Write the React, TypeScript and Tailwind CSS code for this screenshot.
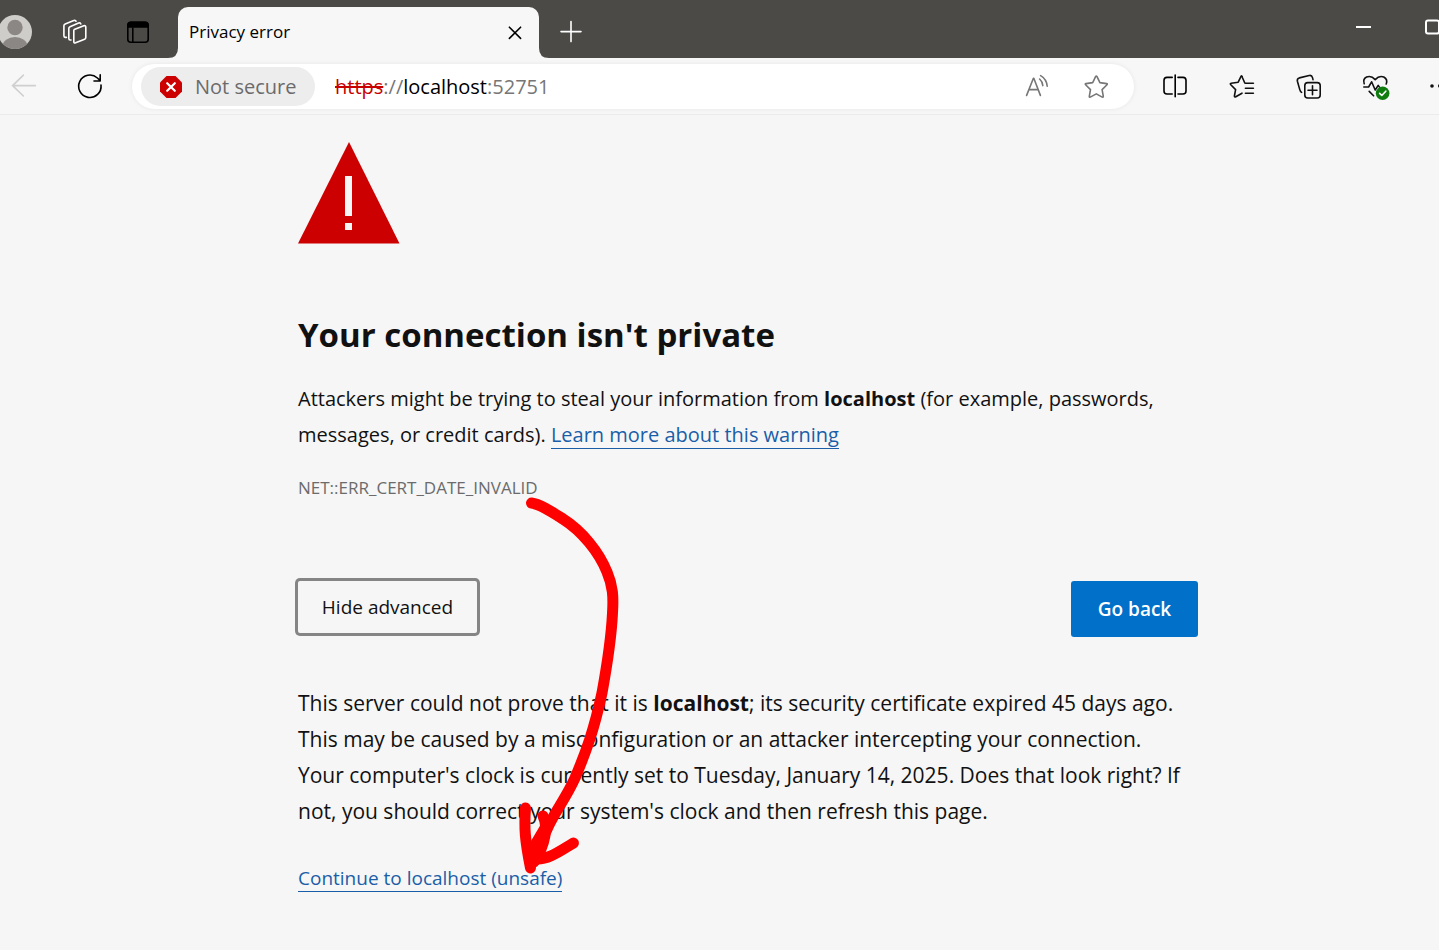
import React from "react";

type IconProps = { className?: string; children: React.ReactNode };

function Icon({ className = "", children }: IconProps) {
  return (
    <svg
      viewBox="0 0 28 28"
      className={`size-7 shrink-0 ${className}`}
      fill="none"
      stroke="currentColor"
      strokeWidth="1.6"
      strokeLinecap="round"
      strokeLinejoin="round"
      aria-hidden="true"
    >
      {children}
    </svg>
  );
}

function TitleBar() {
  return (
    <header className="flex h-[58px] items-end overflow-hidden bg-[#4b4a47] text-white">
      <div className="flex h-[51px] w-[168px] shrink-0 items-center pb-[2px]">
        <button type="button" aria-label="Profile" className="-ml-[2px]">
          <svg viewBox="0 0 34 34" className="size-[34px]" aria-hidden="true">
            <defs>
              <clipPath id="avatar">
                <circle cx="17" cy="17" r="17" />
              </clipPath>
            </defs>
            <g clipPath="url(#avatar)">
              <rect width="34" height="34" fill="#cfcdca" />
              <circle cx="17" cy="12.5" r="7.7" fill="#8b8784" />
              <ellipse cx="17" cy="31" rx="12.5" ry="9" fill="#8b8784" />
            </g>
          </svg>
        </button>
        <button type="button" aria-label="Workspaces" className="ml-[29px]">
          <Icon>
            <path d="M13.2 11.6 22.8 7.8Q24.8 7.2 24.8 9.2V19.2Q24.8 20.6 23.6 21.2L14.6 24.8Q12.8 25.4 12.8 23.6V12.8Q12.8 11.9 13.2 11.6Z" />
            <path d="M10 22H9.2Q7.8 22 7.8 20.4V10.6Q7.8 9.2 9 8.7L17.6 5Q19.6 4.4 19.8 6" />
            <path d="M5.4 19.4H4.2Q2.9 19.2 2.9 17.8V7.8Q2.9 6.6 4.2 6L12.8 2.6Q14.6 2 15 3.2" />
          </Icon>
        </button>
        <button type="button" aria-label="Tab actions menu" className="ml-[35px] text-black">
          <Icon>
            <rect x="3.8" y="4.2" width="20.4" height="20" rx="3" />
            <path d="M4 9V6.5Q4.5 4.2 7 4.2H21Q23.5 4.2 24 6.5V9Z" fill="currentColor" />
            <path d="M8.8 10V24" />
          </Icon>
        </button>
      </div>
      <svg viewBox="0 0 10 10" className="size-[10px] shrink-0" aria-hidden="true">
        <path d="M10 0V10H0Q10 10 10 0Z" fill="#f7f7f7" />
      </svg>
      <div className="flex h-[51px] w-[361px] shrink-0 items-center justify-between rounded-t-[10px] bg-[#f7f7f7] pb-[2px] pl-[11px] pr-[10px] text-black">
        <span className="text-[17px] leading-6">Privacy error</span>
        <button type="button" aria-label="Close tab">
          <Icon>
            <path d="M8.4 9.2 19.6 20.4M19.6 9.2 8.4 20.4" />
          </Icon>
        </button>
      </div>
      <svg viewBox="0 0 10 10" className="size-[10px] shrink-0" aria-hidden="true">
        <path d="M0 0V10H10Q0 10 0 0Z" fill="#f7f7f7" />
      </svg>
      <div className="flex h-[51px] flex-1 items-center pb-[2px] pl-[8px]">
        <button type="button" aria-label="New tab">
          <Icon>
            <path d="M14 3.6V23.6M4 13.6H24" />
          </Icon>
        </button>
      </div>
      <div className="-mr-[9px] flex h-[58px] items-center gap-[40px] pb-[4px]">
        <button type="button" aria-label="Minimize">
          <Icon>
            <path d="M4 14H19" strokeWidth="2" strokeLinecap="butt" />
          </Icon>
        </button>
        <button type="button" aria-label="Maximize">
          <Icon>
            <rect x="6" y="7.5" width="13" height="13" rx="2" strokeWidth="2" />
          </Icon>
        </button>
      </div>
    </header>
  );
}

function AddressBar() {
  return (
    <div className="ml-[28px] flex h-[45px] flex-1 items-center rounded-full bg-white pl-[9px] pr-[24px] shadow-[0_0_5px_rgba(0,0,0,0.07)]">
      <button
        type="button"
        className="flex h-[39px] w-[174px] shrink-0 items-center gap-[12px] rounded-full bg-[#ededed] pl-[18px] text-[20px] leading-7 text-[#6b6b6b]"
      >
        <svg viewBox="0 0 24 24" className="size-6 shrink-0" aria-hidden="true">
          <path d="M7.5 1H16.5L23 7.5V16.5L16.5 23H7.5L1 16.5V7.5Z" fill="#cc0000" />
          <path d="M8.2 8.2 15.8 15.8M15.8 8.2 8.2 15.8" stroke="#fff" strokeWidth="2.2" strokeLinecap="round" />
        </svg>
        <span className="whitespace-nowrap">Not secure</span>
      </button>
      <div
        role="textbox"
        aria-label="Address and search bar"
        tabIndex={0}
        className="ml-[20px] flex-1 whitespace-nowrap text-[20px] leading-7 text-[#767676]"
      >
        <span className="text-[#c80000] line-through">https</span>://<span className="text-black">localhost</span>:52751
      </div>
      <button type="button" aria-label="Read aloud" className="text-[#767676]">
        <Icon>
          <path d="M3.6 22.4 10.4 5.2H10.8L17.4 22.4M6 16.600H15" />
          <path d="M16.6 6Q19.4 8.400 19.8 12.600M17.6 2.600Q23.6 6 24.2 13.200" />
        </Icon>
      </button>
      <button type="button" aria-label="Add to favorites" className="ml-[31px] text-[#767676]">
        <Icon>
          <path d="M14.9 3.4 17.9 9.6 24.6 10.6Q25.8 10.9 25 11.8L20.1 16.6 21.3 23.3Q21.3 24.5 20.2 24.1L14.3 20.9 8.3 24.1Q7.2 24.5 7.3 23.3L8.5 16.6 3.6 11.8Q2.8 10.9 4 10.6L10.7 9.6 13.7 3.4Q14.3 2.5 14.9 3.4Z" />
        </Icon>
      </button>
    </div>
  );
}

function Toolbar() {
  return (
    <nav className="flex h-[57px] items-center overflow-hidden border-b border-[#ebebeb] bg-[#f7f7f7] pl-[10px] pt-px text-[#111]">
      <button type="button" aria-label="Back" className="text-[#cfcfcf]">
        <Icon>
          <path d="M25.4 12.6H2.4M13.4 2.2 2.6 12.6 13.4 23" />
        </Icon>
      </button>
      <button type="button" aria-label="Refresh" className="ml-[38px]">
        <Icon className="text-black">
          <path d="M25 12A11.2 11.2 0 1 1 21.4 5L24 7.4M24.2 1.800V8H18" />
        </Icon>
      </button>
      <AddressBar />
      <div className="-mr-[18px] ml-[27px] flex items-center gap-[39px]">
        <button type="button" aria-label="Split screen">
          <Icon className="text-black">
            <path d="M11.2 4.4H6Q3 4.4 3 7.4V18Q3 21 6 21H11.2M17 4.4H22Q25 4.4 25 7.4V18Q25 21 22 21H17M14.2 2V23.8" />
          </Icon>
        </button>
        <button type="button" aria-label="Favorites">
          <Icon>
            <path d="M16.8 10 14.6 5Q13.8 1.8 13 3.4L10.2 9.2 3.2 10.2Q1.6 10.6 2.8 11.8L7.6 16.6 6.4 23Q6.4 24.4 7.8 23.8L14 20.2M17.4 10.3H25.4M17.4 15.3H25.4M17.4 20.3H25.4" />
          </Icon>
        </button>
        <button type="button" aria-label="Collections">
          <Icon>
            <path d="M6.6 19.4Q5.2 18.6 4.7 16.4L2.4 8.2Q1.8 5.6 4.4 4.9L14.2 2.5Q16.8 1.9 17.5 4.6L18 6.6" />
            <rect x="9.8" y="9.6" width="15.4" height="15.4" rx="3" />
            <path d="M17.5 12.8V21.8M13 17.3H22" />
          </Icon>
        </button>
        <button type="button" aria-label="Browser essentials">
          <Icon className="overflow-visible">
            <path d="M2.2 10.8Q0.6 6 4.6 4Q9.2 2.2 13.2 6.6Q17.2 2.2 21.8 4Q26 6.4 24.2 11M1.8 14H6.6L9.600 8.8 13.2 17 16.2 12.4 17.6 14.4M7.2 18.4 11.600 22.8" />
            <circle cx="20.6" cy="20.2" r="6.8" fill="#107c10" stroke="none" />
            <path d="M17.6 20.400 19.8 22.500 23.8 18.2" stroke="#fff" />
          </Icon>
        </button>
        <button type="button" aria-label="Settings and more">
          <Icon>
            <g fill="currentColor" stroke="none">
              <circle cx="3" cy="13" r="1.8" />
              <circle cx="10.8" cy="13" r="1.8" />
              <circle cx="18.6" cy="13" r="1.8" />
            </g>
          </Icon>
        </button>
      </div>
    </nav>
  );
}

function ArrowMark() {
  return (
    <svg
      viewBox="518 490 110 390"
      className="pointer-events-none absolute left-[220px] top-[375px] h-[390px] w-[110px]"
      fill="none"
      stroke="#ff0000"
      strokeWidth="11"
      strokeLinecap="round"
      strokeLinejoin="round"
      aria-hidden="true"
    >
      <path d="M531.5 503C540 504 552 512 563 519C582 531 599 552 607 572C613 586 613.5 597 612.5 613C611.5 634 608 660 602 693C594 730 586 752 575 778C566 798 556 810 549 825C545 834 541 843 534 856" />
      <path d="M525.5 808C524 828 525 840 530.5 868" />
      <path d="M573.5 843C560 851 548 860 536 859" />
      <path d="M543 816C548 826 546 844 534 862L532 850L545 828" />
    </svg>
  );
}

export default function App() {
  return (
    <div className="min-h-screen overflow-x-hidden bg-[#f6f6f6] font-['Open_Sans','Noto_Sans',sans-serif] text-[#111]">
      <TitleBar />
      <Toolbar />
      <main className="pl-[57px]">
        <div className="relative mx-auto max-w-[900px] pb-14 pt-[27px]">
          <svg viewBox="0 0 102 102" className="size-[102px]" role="img" aria-label="Warning">
            <path d="M51 0 101.5 101.5H0Z" fill="#cc0000" />
            <path d="M47 34H54V74H47ZM47 81H54V88H47Z" fill="#f6f6f6" />
          </svg>
          <h1 className="mt-[67px] text-[33px] font-bold leading-[48px]">Your connection isn't private</h1>
          <p className="mt-[22px] text-[20px] leading-9">
            Attackers might be trying to steal your information from <strong>localhost</strong> (for example, passwords,
            <br />
            messages, or credit cards).{" "}
            <a href="#learn-more" className="border-b border-[#1a5ea8] text-[#1a5ea8]">
              Learn more about this warning
            </a>
          </p>
          <p className="mt-[23px] text-[17px] leading-6 text-[#6b6b6b]">NET::ERR_CERT_DATE_INVALID</p>
          <div className="mt-[81px] flex items-start justify-between">
            <button
              type="button"
              className="h-[52px] w-[179px] rounded-[2px] text-[19px] leading-6 ring-[3px] ring-[#858585]"
            >
              Hide advanced
            </button>
            <button
              type="button"
              className="h-[56px] w-[127px] rounded-[3px] bg-[#0070c9] text-[19px] font-semibold leading-6 text-white"
            >
              Go back
            </button>
          </div>
          <p className="mt-[48px] text-[21px] leading-9">
            This server could not prove that it is <strong>localhost</strong>; its security certificate expired 45 days ago.
            <br />
            This may be caused by a misconfiguration or an attacker intercepting your connection.
            <br />
            Your computer's clock is currently set to Tuesday, January 14, 2025. Does that look right? If
            <br />
            not, you should correct your system's clock and then refresh this page.
          </p>
          <p className="mt-[31px] text-[19px] leading-9">
            <a href="#continue" className="border-b border-[#1a5ea8] text-[#1a5ea8]">
              Continue to localhost (unsafe)
            </a>
          </p>
          <ArrowMark />
        </div>
      </main>
    </div>
  );
}
